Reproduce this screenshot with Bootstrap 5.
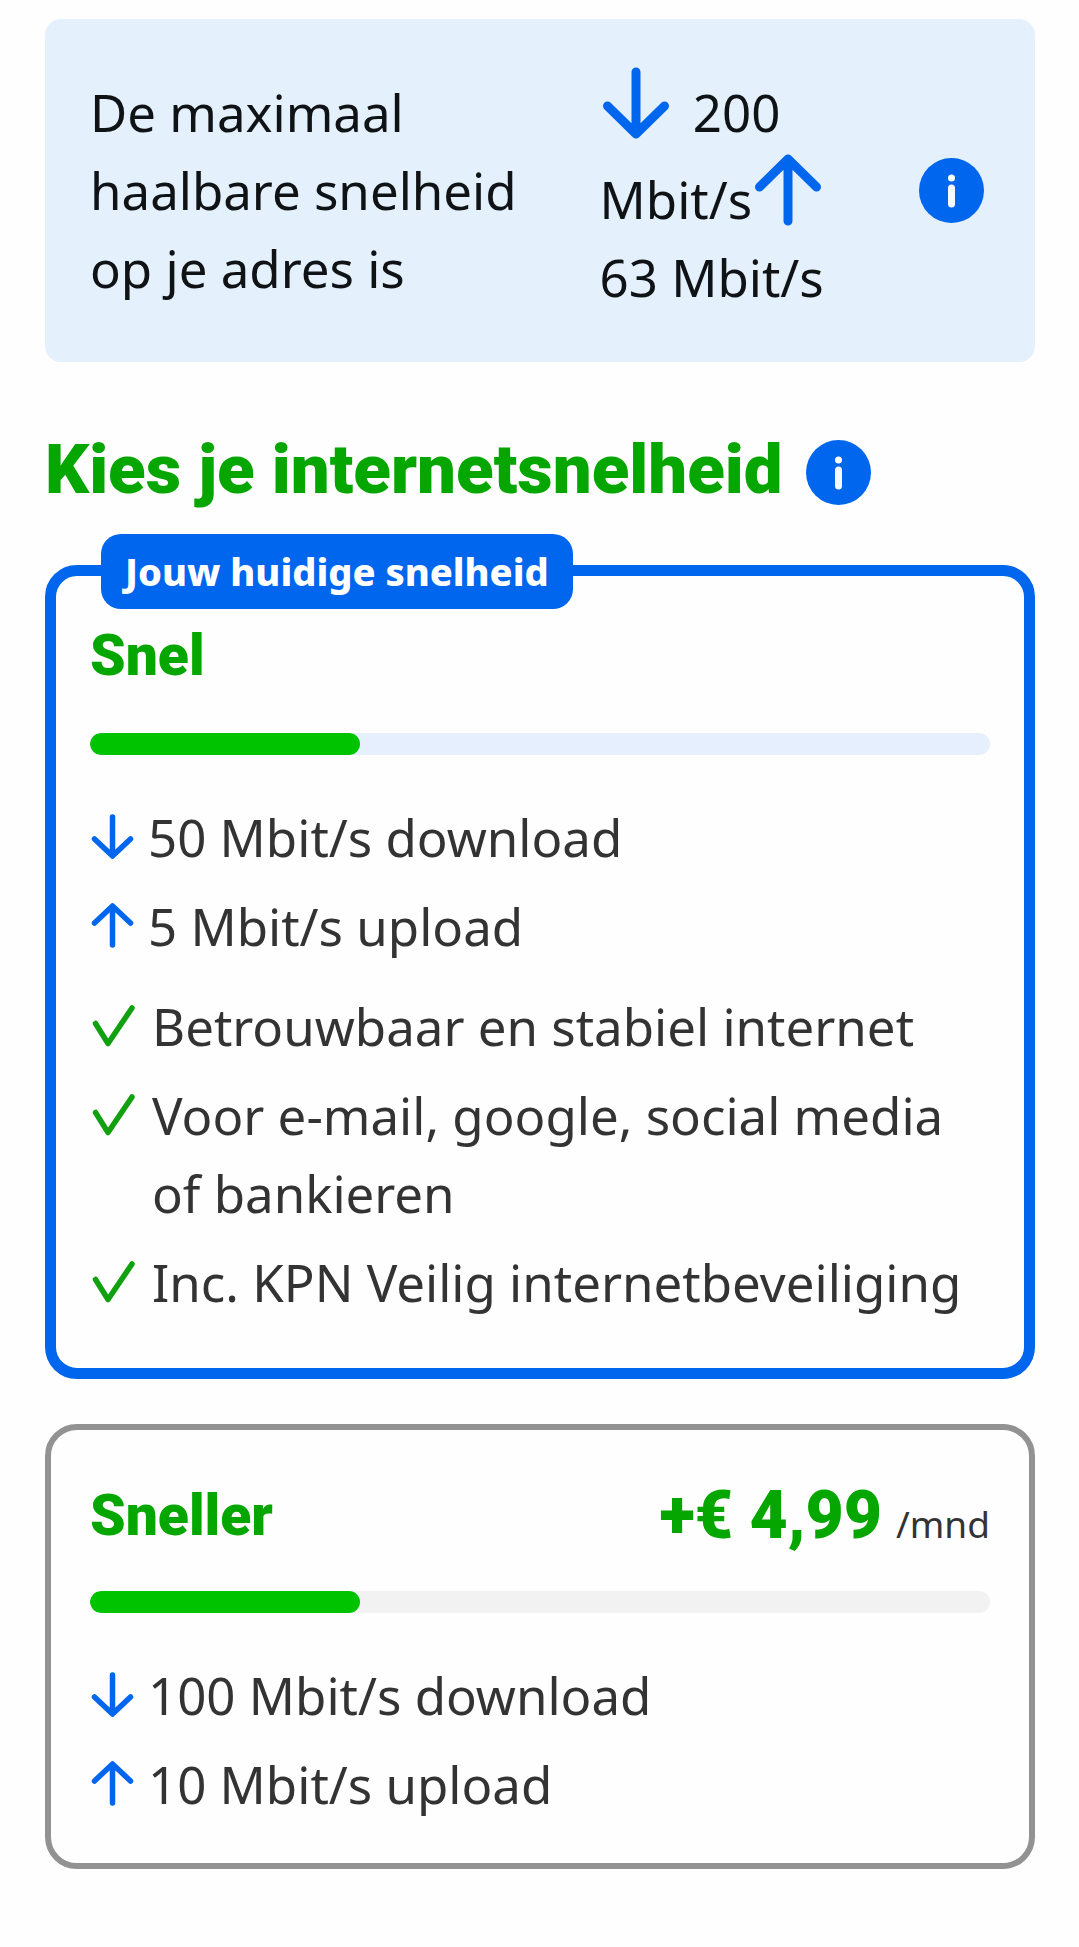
<!DOCTYPE html>
<html lang="nl">
<head>
<meta charset="utf-8">
<meta name="viewport" content="width=device-width, initial-scale=1">
<title>Kies je internetsnelheid</title>
<link href="https://cdn.jsdelivr.net/npm/bootstrap@5.3.0/dist/css/bootstrap.min.css" rel="stylesheet">
<style>
  :root { --blue: #0066ee; --green: #06a600; --bright: #00c300; }
  body { font-family: "Noto Sans", "Open Sans", sans-serif; font-size: 51px; line-height: 78px; color: #333; background: #fefefe; }
  .page { padding: 19px 44px 45px 45px; }
  .heavy { font-family: Roboto, "Noto Sans", sans-serif; font-weight: 900; color: var(--green); }
  .speed-info { background: #e4f0fb; border-radius: 16px; padding: 45px 51px 46px 45px; color: #101316; }
  .speed-label { flex: 0 0 57%; }
  .big-arrow { width: 72px; height: 78px; vertical-align: -10px; }
  .info-btn { width: 65px; height: 65px; line-height: 0; }
  .info-btn svg { width: 65px; height: 65px; }
  .page-title { font-size: 69px; line-height: 70px; }
  .title-row { margin: 73px 0 60px; gap: 23px; }
  .plan { border-radius: 32px; background: #fefefe; }
  .plan-current { border: 11px solid var(--blue); padding: 48px 34px 47px; }
  .plan-other { border: 6px solid #929292; padding: 50px 39px 40px; margin-top: 45px; }
  .plan-tag { top: -42px; left: 45px; padding: 0 24px; border-radius: 20px; background: var(--blue); font-size: 38px; font-weight: 800; line-height: 75px; color: #fff; }
  .plan-title { font-size: 57px; line-height: 64px; }
  .plan-current .plan-title { margin-bottom: 45px; }
  .plan-head { margin-bottom: 39px; }
  .price-line { gap: 14px; }
  .price { font-size: 66px; line-height: 72px; }
  .per { font-size: 37px; line-height: 37px; }
  .speed-bar { height: 22px; border-radius: 11px; background: #e5effd; margin-bottom: 43px; }
  .plan-other .speed-bar { background: #f2f2f2; }
  .speed-bar .progress-bar { background: var(--bright); border-radius: 11px; }
  .rates, .perks { gap: 11px; }
  .rates li { gap: 13px; }
  .perks { margin-top: 22px; }
  .perks li { gap: 17px; }
  .rates svg, .perks svg { width: 45px; height: 45px; margin-top: 16px; }
  .ink-blue { stroke: var(--blue); }
  .ink-green { stroke: #10a010; }
</style>
</head>
<body>
<svg class="d-none" aria-hidden="true">
  <symbol id="arrow-down" viewBox="0 0 72 78"><path d="M36 8V69M7.500 42L36 70L64.500 42" fill="none" stroke-width="9" stroke-linecap="round" stroke-linejoin="round"/></symbol>
  <symbol id="arrow-up" viewBox="0 0 72 78"><path d="M36 70V9M7.500 36L36 8L64.500 36" fill="none" stroke-width="9" stroke-linecap="round" stroke-linejoin="round"/></symbol>
  <symbol id="row-down" viewBox="0 0 45 45"><path d="M22.500 3V41M4.500 25L22.500 42L40.500 25" fill="none" stroke-width="5.500" stroke-linecap="round" stroke-linejoin="round"/></symbol>
  <symbol id="row-up" viewBox="0 0 45 45"><path d="M22.500 42V4M4.500 20L22.500 3L40.500 20" fill="none" stroke-width="5.500" stroke-linecap="round" stroke-linejoin="round"/></symbol>
  <symbol id="check" viewBox="0 0 45 45"><path d="M5.500 20.500L18 40.500L42 5" fill="none" stroke-width="5.500" stroke-linecap="round" stroke-linejoin="round"/></symbol>
  <symbol id="info" viewBox="0 0 65 65"><circle cx="32.500" cy="32.500" r="32.500" fill="#0066ee"/><circle cx="32.500" cy="20" r="3.500" fill="#fff"/><path d="M32.500 30V46" stroke="#f4faff" stroke-width="7" stroke-linecap="round"/></symbol>
</svg>

<main class="page">
  <section class="speed-info d-flex align-items-center">
    <p class="speed-label mb-0">De maximaal<br>haalbare snelheid<br>op je adres is</p>
    <p class="flex-fill mb-0"><svg class="big-arrow ink-blue me-2" role="img" aria-label="Download"><use href="#arrow-down"/></svg> 200<br>Mbit/s<svg class="big-arrow ink-blue" role="img" aria-label="Upload"><use href="#arrow-up"/></svg><br>63 Mbit/s</p>
    <button type="button" class="info-btn btn p-0 border-0 rounded-circle flex-shrink-0" aria-label="Meer informatie over snelheid"><svg><use href="#info"/></svg></button>
  </section>

  <div class="title-row d-flex align-items-end">
    <h1 class="page-title heavy mb-0">Kies je internetsnelheid</h1>
    <button type="button" class="info-btn btn p-0 border-0 rounded-circle flex-shrink-0" aria-label="Meer informatie over internetsnelheid"><svg><use href="#info"/></svg></button>
  </div>

  <section class="plan plan-current position-relative">
    <span class="plan-tag position-absolute text-nowrap">Jouw huidige snelheid</span>
    <h2 class="plan-title heavy">Snel</h2>
    <div class="speed-bar progress" role="progressbar" aria-label="Snelheid Snel" aria-valuenow="30" aria-valuemin="0" aria-valuemax="100"><div class="progress-bar" style="width: 30%"></div></div>
    <ul class="rates list-unstyled d-flex flex-column mb-0">
      <li class="d-flex"><svg class="ink-blue flex-shrink-0"><use href="#row-down"/></svg><span>50 Mbit/s download</span></li>
      <li class="d-flex"><svg class="ink-blue flex-shrink-0"><use href="#row-up"/></svg><span>5 Mbit/s upload</span></li>
    </ul>
    <ul class="perks list-unstyled d-flex flex-column mb-0">
      <li class="d-flex"><svg class="ink-green flex-shrink-0"><use href="#check"/></svg><span>Betrouwbaar en stabiel internet</span></li>
      <li class="d-flex"><svg class="ink-green flex-shrink-0"><use href="#check"/></svg><span>Voor e-mail, google, social media of bankieren</span></li>
      <li class="d-flex"><svg class="ink-green flex-shrink-0"><use href="#check"/></svg><span>Inc. KPN Veilig internetbeveiliging</span></li>
    </ul>
  </section>

  <section class="plan plan-other">
    <div class="plan-head d-flex justify-content-between align-items-center">
      <h2 class="plan-title heavy mb-0">Sneller</h2>
      <div class="price-line d-flex align-items-baseline"><span class="price heavy">+€ 4,99</span><span class="per">/mnd</span></div>
    </div>
    <div class="speed-bar progress" role="progressbar" aria-label="Snelheid Sneller" aria-valuenow="30" aria-valuemin="0" aria-valuemax="100"><div class="progress-bar" style="width: 30%"></div></div>
    <ul class="rates list-unstyled d-flex flex-column mb-0">
      <li class="d-flex"><svg class="ink-blue flex-shrink-0"><use href="#row-down"/></svg><span>100 Mbit/s download</span></li>
      <li class="d-flex"><svg class="ink-blue flex-shrink-0"><use href="#row-up"/></svg><span>10 Mbit/s upload</span></li>
    </ul>
  </section>
</main>
<script src="https://cdn.jsdelivr.net/npm/bootstrap@5.3.0/dist/js/bootstrap.bundle.min.js"></script>
</body>
</html>
